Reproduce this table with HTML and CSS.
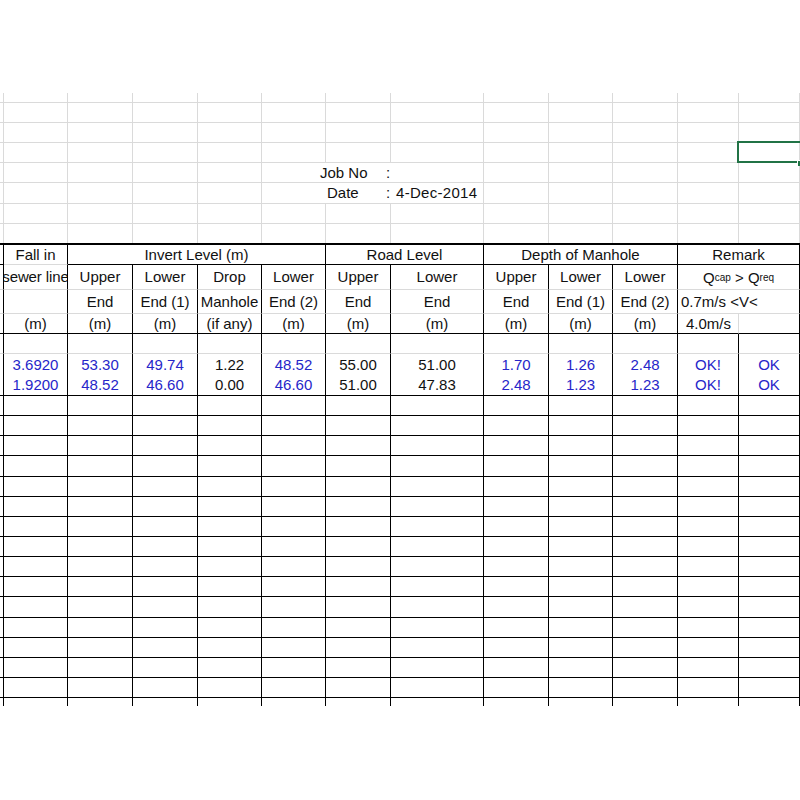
FILE: index.html
```html
<!DOCTYPE html>
<html>
<head>
<meta charset="utf-8">
<link rel="stylesheet" href="styles.css">
</head>
<body>
<div class="sheet">
  <!-- top free area -->
  <div class="row h10"><div class="c"></div><div class="c"></div><div class="c"></div><div class="c"></div><div class="c"></div><div class="c"></div><div class="c"></div><div class="c"></div><div class="c"></div><div class="c"></div><div class="c"></div><div class="c"></div><div class="c"></div></div>
  <div class="row h20"><div class="c"></div><div class="c"></div><div class="c"></div><div class="c"></div><div class="c"></div><div class="c"></div><div class="c"></div><div class="c"></div><div class="c"></div><div class="c"></div><div class="c"></div><div class="c"></div><div class="c"></div></div>
  <div class="row h20"><div class="c"></div><div class="c"></div><div class="c"></div><div class="c"></div><div class="c"></div><div class="c"></div><div class="c"></div><div class="c"></div><div class="c"></div><div class="c"></div><div class="c"></div><div class="c"></div><div class="c"></div></div>
  <div class="row h20"><div class="c"></div><div class="c"></div><div class="c"></div><div class="c"></div><div class="c"></div><div class="c"></div><div class="c"></div><div class="c"></div><div class="c"></div><div class="c"></div><div class="c"></div><div class="c"></div><div class="c active"><span class="sel"></span><span class="handle"></span></div></div>
  <div class="row h20"><div class="c"></div><div class="c"></div><div class="c"></div><div class="c"></div><div class="c"></div><div class="c info span3"><span class="lbl job">Job No</span><span class="colon">:</span><span class="val"></span></div><div class="c"></div><div class="c"></div><div class="c"></div><div class="c"></div><div class="c"></div></div>
  <div class="row h21"><div class="c"></div><div class="c"></div><div class="c"></div><div class="c"></div><div class="c"></div><div class="c info span3"><span class="lbl date">Date</span><span class="colon">:</span><span class="val">4-Dec-2014</span></div><div class="c"></div><div class="c"></div><div class="c"></div><div class="c"></div><div class="c"></div></div>
  <div class="row h20"><div class="c"></div><div class="c"></div><div class="c"></div><div class="c"></div><div class="c"></div><div class="c"></div><div class="c"></div><div class="c"></div><div class="c"></div><div class="c"></div><div class="c"></div><div class="c"></div><div class="c"></div></div>
  <div class="row h19 open"><div class="c"></div><div class="c"></div><div class="c"></div><div class="c"></div><div class="c"></div><div class="c"></div><div class="c"></div><div class="c"></div><div class="c"></div><div class="c"></div><div class="c"></div><div class="c"></div><div class="c"></div></div>

  <!-- table header -->
  <div class="row hdr1">
    <div class="c b bb"></div>
    <div class="c b">Fall in</div>
    <div class="c b bb span4">Invert Level (m)</div>
    <div class="c b bb span2">Road Level</div>
    <div class="c b bb span3">Depth of Manhole</div>
    <div class="c b bb span2">Remark</div>
  </div>
  <div class="row h25">
    <div class="c b"></div>
    <div class="c b clip">sewer line</div>
    <div class="c b">Upper</div>
    <div class="c b">Lower</div>
    <div class="c b">Drop</div>
    <div class="c b">Lower</div>
    <div class="c b">Upper</div>
    <div class="c b">Lower</div>
    <div class="c b">Upper</div>
    <div class="c b">Lower</div>
    <div class="c b">Lower</div>
    <div class="c b span2 q">Q<sub>cap</sub>&nbsp;&gt; Q<sub>req</sub></div>
  </div>
  <div class="row h24">
    <div class="c b"></div>
    <div class="c b"></div>
    <div class="c b">End</div>
    <div class="c b">End (1)</div>
    <div class="c b">Manhole</div>
    <div class="c b">End (2)</div>
    <div class="c b">End</div>
    <div class="c b">End</div>
    <div class="c b">End</div>
    <div class="c b">End (1)</div>
    <div class="c b">End (2)</div>
    <div class="c b span2 left">0.7m/s &lt;V&lt;</div>
  </div>
  <div class="row h20">
    <div class="c b bb"></div>
    <div class="c b bb">(m)</div>
    <div class="c b bb">(m)</div>
    <div class="c b bb">(m)</div>
    <div class="c b bb">(if any)</div>
    <div class="c b bb">(m)</div>
    <div class="c b bb">(m)</div>
    <div class="c b bb">(m)</div>
    <div class="c b bb">(m)</div>
    <div class="c b bb">(m)</div>
    <div class="c b bb">(m)</div>
    <div class="c bb left indent">4.0m/s</div>
    <div class="c b bb"></div>
  </div>

  <!-- table body -->
  <div class="row h20"><div class="c b"></div><div class="c b"></div><div class="c b"></div><div class="c b"></div><div class="c b"></div><div class="c b"></div><div class="c b"></div><div class="c b"></div><div class="c b"></div><div class="c b"></div><div class="c b"></div><div class="c b"></div><div class="c b"></div></div>
  <div class="row h21 data">
    <div class="c b nb"></div>
    <div class="c b nb blue">3.6920</div>
    <div class="c b nb blue">53.30</div>
    <div class="c b nb blue">49.74</div>
    <div class="c b nb">1.22</div>
    <div class="c b nb blue">48.52</div>
    <div class="c b nb">55.00</div>
    <div class="c b nb">51.00</div>
    <div class="c b nb blue">1.70</div>
    <div class="c b nb blue">1.26</div>
    <div class="c b nb blue">2.48</div>
    <div class="c b nb blue">OK!</div>
    <div class="c b nb blue">OK</div>
  </div>
  <div class="row h21 data">
    <div class="c b bb"></div>
    <div class="c b bb blue">1.9200</div>
    <div class="c b bb blue">48.52</div>
    <div class="c b bb blue">46.60</div>
    <div class="c b bb">0.00</div>
    <div class="c b bb blue">46.60</div>
    <div class="c b bb">51.00</div>
    <div class="c b bb">47.83</div>
    <div class="c b bb blue">2.48</div>
    <div class="c b bb blue">1.23</div>
    <div class="c b bb blue">1.23</div>
    <div class="c b bb blue">OK!</div>
    <div class="c b bb blue">OK</div>
  </div>
  <div class="row h20 grid"><div class="c"></div><div class="c"></div><div class="c"></div><div class="c"></div><div class="c"></div><div class="c"></div><div class="c"></div><div class="c"></div><div class="c"></div><div class="c"></div><div class="c"></div><div class="c"></div><div class="c"></div></div>
  <div class="row h20 grid"><div class="c"></div><div class="c"></div><div class="c"></div><div class="c"></div><div class="c"></div><div class="c"></div><div class="c"></div><div class="c"></div><div class="c"></div><div class="c"></div><div class="c"></div><div class="c"></div><div class="c"></div></div>
  <div class="row h20 grid"><div class="c"></div><div class="c"></div><div class="c"></div><div class="c"></div><div class="c"></div><div class="c"></div><div class="c"></div><div class="c"></div><div class="c"></div><div class="c"></div><div class="c"></div><div class="c"></div><div class="c"></div></div>
  <div class="row h21 grid"><div class="c"></div><div class="c"></div><div class="c"></div><div class="c"></div><div class="c"></div><div class="c"></div><div class="c"></div><div class="c"></div><div class="c"></div><div class="c"></div><div class="c"></div><div class="c"></div><div class="c"></div></div>
  <div class="row h20 grid"><div class="c"></div><div class="c"></div><div class="c"></div><div class="c"></div><div class="c"></div><div class="c"></div><div class="c"></div><div class="c"></div><div class="c"></div><div class="c"></div><div class="c"></div><div class="c"></div><div class="c"></div></div>
  <div class="row h20 grid"><div class="c"></div><div class="c"></div><div class="c"></div><div class="c"></div><div class="c"></div><div class="c"></div><div class="c"></div><div class="c"></div><div class="c"></div><div class="c"></div><div class="c"></div><div class="c"></div><div class="c"></div></div>
  <div class="row h20 grid"><div class="c"></div><div class="c"></div><div class="c"></div><div class="c"></div><div class="c"></div><div class="c"></div><div class="c"></div><div class="c"></div><div class="c"></div><div class="c"></div><div class="c"></div><div class="c"></div><div class="c"></div></div>
  <div class="row h20 grid"><div class="c"></div><div class="c"></div><div class="c"></div><div class="c"></div><div class="c"></div><div class="c"></div><div class="c"></div><div class="c"></div><div class="c"></div><div class="c"></div><div class="c"></div><div class="c"></div><div class="c"></div></div>
  <div class="row h20 grid"><div class="c"></div><div class="c"></div><div class="c"></div><div class="c"></div><div class="c"></div><div class="c"></div><div class="c"></div><div class="c"></div><div class="c"></div><div class="c"></div><div class="c"></div><div class="c"></div><div class="c"></div></div>
  <div class="row h20 grid"><div class="c"></div><div class="c"></div><div class="c"></div><div class="c"></div><div class="c"></div><div class="c"></div><div class="c"></div><div class="c"></div><div class="c"></div><div class="c"></div><div class="c"></div><div class="c"></div><div class="c"></div></div>
  <div class="row h21 grid"><div class="c"></div><div class="c"></div><div class="c"></div><div class="c"></div><div class="c"></div><div class="c"></div><div class="c"></div><div class="c"></div><div class="c"></div><div class="c"></div><div class="c"></div><div class="c"></div><div class="c"></div></div>
  <div class="row h20 grid"><div class="c"></div><div class="c"></div><div class="c"></div><div class="c"></div><div class="c"></div><div class="c"></div><div class="c"></div><div class="c"></div><div class="c"></div><div class="c"></div><div class="c"></div><div class="c"></div><div class="c"></div></div>
  <div class="row h20 grid"><div class="c"></div><div class="c"></div><div class="c"></div><div class="c"></div><div class="c"></div><div class="c"></div><div class="c"></div><div class="c"></div><div class="c"></div><div class="c"></div><div class="c"></div><div class="c"></div><div class="c"></div></div>
  <div class="row h20 grid"><div class="c"></div><div class="c"></div><div class="c"></div><div class="c"></div><div class="c"></div><div class="c"></div><div class="c"></div><div class="c"></div><div class="c"></div><div class="c"></div><div class="c"></div><div class="c"></div><div class="c"></div></div>
  <div class="row h20 grid"><div class="c"></div><div class="c"></div><div class="c"></div><div class="c"></div><div class="c"></div><div class="c"></div><div class="c"></div><div class="c"></div><div class="c"></div><div class="c"></div><div class="c"></div><div class="c"></div><div class="c"></div></div>
  <div class="row h8 grid open"><div class="c"></div><div class="c"></div><div class="c"></div><div class="c"></div><div class="c"></div><div class="c"></div><div class="c"></div><div class="c"></div><div class="c"></div><div class="c"></div><div class="c"></div><div class="c"></div><div class="c"></div></div>
</div>
</body>
</html>
```
FILE: styles.css
```css
:root {
  --grid: #dadada;
  --ink: #111111;
  --blue: #2626c9;
  --cols: 4px 64px 65px 65px 64px 64px 65px 93px 65px 64px 65px 61px 61px;
}

html, body {
  margin: 0;
  padding: 0;
  background: #ffffff;
}

body {
  width: 800px;
  height: 800px;
  overflow: hidden;
  font-family: "Liberation Sans", Arial, sans-serif;
  font-size: 15px;
  color: var(--ink);
}

.sheet {
  margin-top: 93px;
  width: 800px;
  overflow: hidden;
}

.row {
  display: grid;
  grid-template-columns: var(--cols);
  box-sizing: border-box;
}

.h8 { height: 8px; }
.h10 { height: 10px; }
.h19 { height: 19px; }
.h20 { height: 20px; }
.h21 { height: 21px; }
.h24 { height: 24px; }
.h25 { height: 25px; }

.hdr1 {
  height: 22px;
  border-top: 2px solid #000;
}

.c {
  box-sizing: border-box;
  border-right: 1px solid var(--grid);
  border-bottom: 1px solid var(--grid);
  display: flex;
  align-items: center;
  justify-content: center;
  overflow: hidden;
  white-space: nowrap;
  line-height: 18px;
  min-width: 0;
}

.open .c { border-bottom: none; }

.b { border-right-color: #000; }
.bb { border-bottom-color: #000; }
.nb { border-bottom: none; }

.grid .c {
  border-right-color: #000;
  border-bottom-color: #000;
}

.span2 { grid-column: span 2; }
.span3 { grid-column: span 3; }
.span4 { grid-column: span 4; }

.clip { letter-spacing: -0.1px; }

.left {
  justify-content: flex-start;
  padding-left: 3px;
}

.indent { padding-left: 8px; }

.blue { color: var(--blue); }

.q { padding-top: 2px; }

.q sub {
  font-size: 10px;
  vertical-align: -5px;
  line-height: 0;
}

/* Job No / Date block */
.info {
  justify-content: flex-start;
  overflow: visible;
}

.lbl {
  box-sizing: border-box;
  width: 124px;
  flex: 0 0 124px;
}

.lbl.job { padding-left: 58px; }
.lbl.date { padding-left: 65px; }

.colon {
  width: 6px;
  flex: 0 0 6px;
}

.val {
  padding-left: 4px;
  letter-spacing: 0.3px;
}

/* active cell selection */
.active {
  position: relative;
  overflow: visible;
}

.sel {
  position: absolute;
  left: -2px;
  top: -2px;
  right: -4px;
  bottom: -1px;
  border: 2px solid #217346;
}

.handle {
  position: absolute;
  left: 58px;
  top: 17px;
  width: 5px;
  height: 5px;
  background: #217346;
  border-left: 1px solid #fff;
  border-top: 1px solid #fff;
}
```
